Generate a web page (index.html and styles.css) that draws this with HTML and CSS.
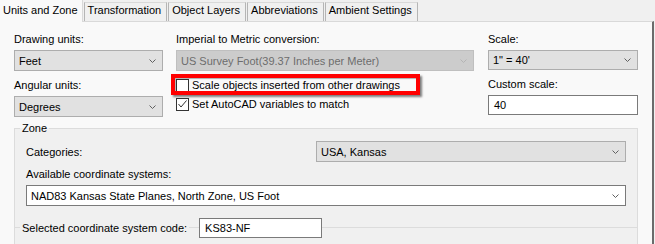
FILE: index.html
```html
<!DOCTYPE html>
<html lang="en">
<head>
    <meta charset="UTF-8">
    <meta name="viewport" content="width=device-width, initial-scale=1.0">
    <title>Drawing Settings - Units and Zone</title>
    <link rel="stylesheet" href="styles.css">
</head>
<body>
    <div class="dialog">
        <div class="tabs">
            <div class="tab active">Units and Zone</div>
            <div class="tab">Transformation</div>
            <div class="tab">Object Layers</div>
            <div class="tab">Abbreviations</div>
            <div class="tab">Ambient Settings</div>
        </div>

        <div class="panel">
            <div class="units-grid">
                <!-- left column -->
                <div class="column">
                    <div class="field">
                        <label>Drawing units:</label>
                        <div class="combo">Feet
                            <svg class="chev" width="7" height="4" viewBox="0 0 7 4"><path d="M0.5 0.5 L3.5 3.5 L6.5 0.5"/></svg>
                        </div>
                    </div>
                    <div class="field">
                        <label>Angular units:</label>
                        <div class="combo">Degrees
                            <svg class="chev" width="7" height="4" viewBox="0 0 7 4"><path d="M0.5 0.5 L3.5 3.5 L6.5 0.5"/></svg>
                        </div>
                    </div>
                </div>

                <!-- middle column -->
                <div class="column">
                    <div class="field">
                        <label>Imperial to Metric conversion:</label>
                        <div class="combo disabled">US Survey Foot(39.37 Inches per Meter)
                            <svg class="chev" width="7" height="4" viewBox="0 0 7 4"><path d="M0.5 0.5 L3.5 3.5 L6.5 0.5"/></svg>
                        </div>
                    </div>
                    <div class="checks">
                        <div class="check highlight">
                            <span class="box"></span>
                            Scale objects inserted from other drawings
                        </div>
                        <div class="check">
                            <span class="box">
                                <svg width="11" height="11" viewBox="0 0 11 11"><path d="M1.5 5 L4 8 L9.5 1.5"/></svg>
                            </span>
                            Set AutoCAD variables to match
                        </div>
                    </div>
                </div>

                <!-- right column -->
                <div class="column">
                    <div class="field">
                        <label>Scale:</label>
                        <div class="combo short">1" = 40'
                            <svg class="chev" width="7" height="4" viewBox="0 0 7 4"><path d="M0.5 0.5 L3.5 3.5 L6.5 0.5"/></svg>
                        </div>
                    </div>
                    <div class="field">
                        <label>Custom scale:</label>
                        <div class="textbox">40</div>
                    </div>
                </div>
            </div>

            <fieldset class="zone">
                <legend>Zone</legend>
                <div class="category-row">
                    <span>Categories:</span>
                    <div class="combo category">USA, Kansas
                        <svg class="chev" width="7" height="4" viewBox="0 0 7 4"><path d="M0.5 0.5 L3.5 3.5 L6.5 0.5"/></svg>
                    </div>
                </div>
                <label class="zone-label">Available coordinate systems:</label>
                <div class="combo edit">NAD83 Kansas State Planes, North Zone, US Foot
                    <svg class="chev" width="7" height="4" viewBox="0 0 7 4"><path d="M0.5 0.5 L3.5 3.5 L6.5 0.5"/></svg>
                </div>
                <div class="code-row">
                    <span class="code-label">Selected coordinate system code:</span>
                    <div class="textbox code">KS83-NF</div>
                </div>
            </fieldset>
        </div>
    </div>
</body>
</html>
```

FILE: styles.css
```css
*, *::before, *::after {
    box-sizing: border-box;
}

html, body {
    margin: 0;
    overflow: hidden;
}

body {
    background: #f0f0f0;
    color: #000;
    font-family: "Liberation Sans", Arial, sans-serif;
    font-size: 11px;
}

.dialog {
    width: 655px;
    height: 244px;
    overflow: hidden;
    display: flex;
    flex-direction: column;
}

/* tab strip */
.tabs {
    display: flex;
    height: 21px;
    flex: none;
}

.tab {
    height: 19px;
    margin-top: 2px;
    margin-left: 1px;
    padding: 0 5px 0 3px;
    line-height: 14px;
    background: #f0f0f0;
    border: 1px solid #b5b5b5;
    border-top-color: #d9d9d9;
    border-bottom: none;
}

.tab.active {
    height: 22px;
    margin: 0;
    padding: 3px 4px 0 3px;
    background: #f9f9f9;
    border: none;
    border-right: 1px solid #d9d9d9;
    position: relative;
    z-index: 1;
}

/* page */
.panel {
    flex: 1;
    margin-right: 1px;
    padding: 10px 14px 0;
    background: #f9f9f9;
    border-top: 1px solid #d9d9d9;
    border-right: 2px solid #6b6b6b;
}

.units-grid {
    display: grid;
    grid-template-columns: 149px 299px 150px;
    column-gap: 13px;
}

.column {
    display: flex;
    flex-direction: column;
    gap: 7px;
}

.field label,
.zone-label {
    display: block;
    line-height: 15px;
    margin-bottom: 3px;
}

/* combo boxes */
.combo {
    display: flex;
    align-items: center;
    height: 21px;
    padding: 0 6px 0 4px;
    background: #e1e1e1;
    border: 1px solid #adadad;
    white-space: nowrap;
}

.combo.short {
    height: 20px;
}

.combo .chev {
    margin-left: auto;
    fill: none;
    stroke: #606060;
}

.combo.disabled {
    width: 298px;
    background: #cccccc;
    border-color: #bfbfbf;
    color: #6d6d6d;
}

.combo.disabled .chev {
    stroke: #b4b4b4;
}

.combo.edit {
    background: #fff;
    border-color: #7a7a7a;
}

.textbox {
    height: 20px;
    padding-left: 5px;
    line-height: 18px;
    background: #fff;
    border: 1px solid #7a7a7a;
}

/* checkboxes */
.checks {
    display: flex;
    flex-direction: column;
    gap: 3px;
    margin-top: -1px;
}

.check {
    display: flex;
    align-items: center;
    gap: 3px;
    height: 16px;
    white-space: nowrap;
}

.check .box {
    width: 13px;
    height: 13px;
    display: flex;
    align-items: center;
    justify-content: center;
    background: #fff;
    border: 1px solid #333;
}

.check .box svg {
    fill: none;
    stroke: #333;
}

.highlight {
    position: relative;
}

/* red annotation frame */
.highlight::after {
    content: "";
    position: absolute;
    left: -5px;
    top: -3px;
    width: 249px;
    height: 21px;
    border: 4px solid #f00;
    box-shadow: 2px 2px 2px rgba(0,0,0,0.5), inset 1px 1px 1px rgba(0,0,0,0.3);
}

/* zone group */
.zone {
    margin: 4px 0 0;
    padding: 6px 11px 10px;
    min-width: 0;
    background: #f0f0f0;
    border: 1px solid #dcdcdc;
}

.zone legend {
    margin-left: -6px;
    padding: 0 2px;
    line-height: 14px;
}

.category-row {
    display: flex;
    align-items: center;
    justify-content: space-between;
    margin-bottom: 5px;
}

.combo.category {
    width: 310px;
}

.code-row {
    display: flex;
    align-items: center;
    margin: 12px -11px 0;
    background: linear-gradient(#dcdcdc, #dcdcdc) 0 9px / 100% 1px no-repeat;
}

.code-label {
    margin: 0 10px 0 5px;
    padding: 0 2px;
    background: #f0f0f0;
}

.textbox.code {
    width: 123px;
}
```
